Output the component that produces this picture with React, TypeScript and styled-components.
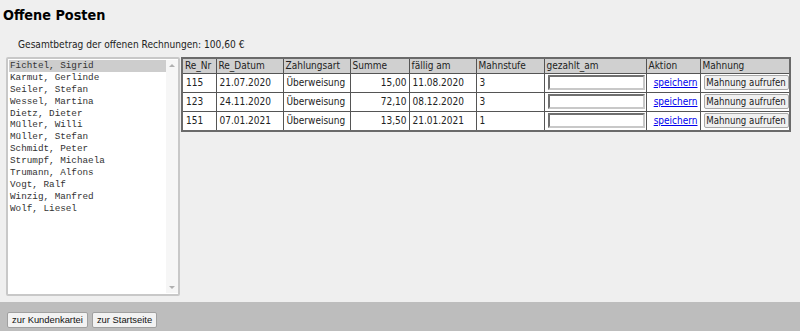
import React from "react";
import styled, { createGlobalStyle } from "styled-components";

const Global = createGlobalStyle`
  html, body { margin: 0; padding: 0; background: #efefef; }
  body { font-family: "DejaVu Sans Condensed", "DejaVu Sans", Verdana, sans-serif; font-size: 10px; color: #000; }
`;

const Page = styled.div`
  width: 800px;
  height: 331px;
  display: flex;
  flex-direction: column;
  background: #efefef;
  overflow: hidden;
`;

const Main = styled.div`
  flex: 1;
  padding: 6px 0 0 6px;
  display: flex;
  flex-direction: column;
`;

const Title = styled.h1`
  margin: 0 0 0 -3px;
  font-family: "DejaVu Sans Condensed", "DejaVu Sans", Verdana, sans-serif;
  font-size: 14.3px;
  font-weight: bold;
  line-height: 18px;
`;

const Total = styled.p`
  margin: 14px 0 0 12px;
  font-size: 10.1px;
  line-height: 13px;
  color: #222;
`;

const Content = styled.div`
  margin-top: 6px;
  display: flex;
  gap: 1px;
  align-items: flex-start;
`;

const ListBox = styled.div`
  width: 169px;
  height: 233px;
  background: #fff;
  border: 2px solid #c8c8c8;
  border-radius: 2px;
  display: flex;
  padding: 1px 0 1px 1px;
`;

const Items = styled.div`
  flex: 1;
  display: flex;
  flex-direction: column;
`;

const Item = styled.div<{ $selected?: boolean }>`
  font-family: "Liberation Mono", "Courier New", monospace;
  font-size: 9.3px;
  line-height: 11.9px;
  height: 11.9px;
  padding-left: 1px;
  color: #333;
  background: ${(p) => (p.$selected ? "#cdcdcd" : "transparent")};
  white-space: nowrap;
`;

const Scroll = styled.div`
  width: 12px;
  background: #f6f6f6;
  display: flex;
  flex-direction: column;
  justify-content: space-between;
  align-items: center;
  padding: 4px 0;
`;

const Arrow = styled.span<{ $down?: boolean }>`
  width: 0;
  height: 0;
  border-left: 3px solid transparent;
  border-right: 3px solid transparent;
  ${(p) =>
    p.$down ? "border-top: 3px solid #b0b0b0;" : "border-bottom: 3px solid #b0b0b0;"}
`;

const Table = styled.table`
  border-collapse: collapse;
  table-layout: fixed;
  width: 608px;
  border: 2px solid #6a6a6a;
  background: #fff;
  font-size: 10px;
`;

const Th = styled.th<{ $w: number }>`
  width: ${(p) => p.$w}px;
  box-sizing: border-box;
  background: #d0d0d0;
  border: 1px solid #555;
  font-weight: normal;
  text-align: left;
  padding: 0 2px;
  height: 15px;
  line-height: 13px;
  color: #222;
  white-space: nowrap;
  overflow: hidden;
`;

const Td = styled.td<{ $align?: string }>`
  border: 1px solid #555;
  padding: 0 2px 0 3px;
  height: 18px;
  line-height: 14px;
  text-align: ${(p) => p.$align || "left"};
  white-space: nowrap;
  color: #222;
`;

const Input = styled.input`
  box-sizing: border-box;
  width: 97px;
  height: 15px;
  border: 2px solid;
  border-color: #707070 #c8c8c8 #c8c8c8 #707070;
  background: #fff;
  padding: 0;
  margin: 0;
  display: block;
`;

const Link = styled.a`
  color: #0000ee;
  text-decoration: underline;
  cursor: pointer;
`;

const CellButton = styled.button`
  font-family: "DejaVu Sans Condensed", "DejaVu Sans", Verdana, sans-serif;
  font-size: 9.6px;
  height: 15px;
  line-height: 11px;
  padding: 0;
  background: #f0f0f0;
  border: 1px solid #a8a8a8;
  border-radius: 2px;
  color: #222;
  width: 85px;
  display: block;
`;

const Footer = styled.div`
  height: 29px;
  background: #bdbdbd;
  display: flex;
  align-items: flex-end;
  gap: 4px;
  padding: 0 0 3px 7px;
  box-sizing: border-box;
`;

const FooterButton = styled.button`
  font-family: "Liberation Sans", Arial, sans-serif;
  font-size: 9.4px;
  height: 16px;
  padding: 0 4px;
  background: #f2f2f2;
  border: 1px solid #a0a0a0;
  border-radius: 2px;
  color: #111;
  line-height: 12px;
`;

const names = [
  "Fichtel, Sigrid",
  "Karmut, Gerlinde",
  "Seiler, Stefan",
  "Wessel, Martina",
  "Dietz, Dieter",
  "Müller, Willi",
  "Müller, Stefan",
  "Schmidt, Peter",
  "Strumpf, Michaela",
  "Trumann, Alfons",
  "Vogt, Ralf",
  "Winzig, Manfred",
  "Wolf, Liesel",
];

const cols: [string, number][] = [
  ["Re_Nr", 34],
  ["Re_Datum", 67],
  ["Zahlungsart", 67],
  ["Summe", 59],
  ["fällig am", 67],
  ["Mahnstufe", 68],
  ["gezahlt_am", 102],
  ["Aktion", 54],
  ["Mahnung", 90],
];

const rows = [
  ["115", "21.07.2020", "Überweisung", "15,00", "11.08.2020", "3"],
  ["123", "24.11.2020", "Überweisung", "72,10", "08.12.2020", "3"],
  ["151", "07.01.2021", "Überweisung", "13,50", "21.01.2021", "1"],
];

export default function App() {
  return (
    <Page>
      <Global />
      <Main>
        <Title>Offene Posten</Title>
        <Total>Gesamtbetrag der offenen Rechnungen: 100,60 €</Total>
        <Content>
          <ListBox>
            <Items>
              {names.map((n, i) => (
                <Item key={n} $selected={i === 0}>
                  {n}
                </Item>
              ))}
            </Items>
            <Scroll>
              <Arrow />
              <Arrow $down />
            </Scroll>
          </ListBox>
          <Table>
            <thead>
              <tr>
                {cols.map(([c, w]) => (
                  <Th key={c} $w={w}>
                    {c}
                  </Th>
                ))}
              </tr>
            </thead>
            <tbody>
              {rows.map((r) => (
                <tr key={r[0]}>
                  <Td>{r[0]}</Td>
                  <Td>{r[1]}</Td>
                  <Td>{r[2]}</Td>
                  <Td $align="right">{r[3]}</Td>
                  <Td>{r[4]}</Td>
                  <Td>{r[5]}</Td>
                  <Td>
                    <Input type="text" />
                  </Td>
                  <Td $align="right">
                    <Link>speichern</Link>
                  </Td>
                  <Td>
                    <CellButton>Mahnung aufrufen</CellButton>
                  </Td>
                </tr>
              ))}
            </tbody>
          </Table>
        </Content>
      </Main>
      <Footer>
        <FooterButton>zur Kundenkartei</FooterButton>
        <FooterButton>zur Startseite</FooterButton>
      </Footer>
    </Page>
  );
}
